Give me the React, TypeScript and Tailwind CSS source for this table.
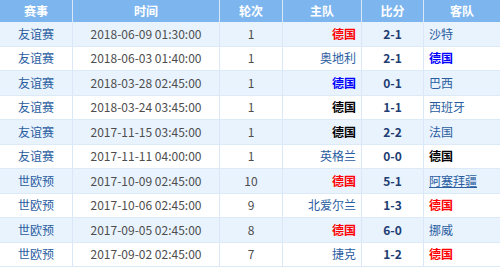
import React from 'react';

type Team = { name: string; style?: 'red' | 'blue' | 'black' | 'link' };

interface Match {
  event: string;
  time: string;
  round: string;
  home: Team;
  score: string;
  away: Team;
}

const matches: Match[] = [
  { event: '友谊赛', time: '2018-06-09 01:30:00', round: '1', home: { name: '德国', style: 'red' }, score: '2-1', away: { name: '沙特' } },
  { event: '友谊赛', time: '2018-06-03 01:40:00', round: '1', home: { name: '奥地利' }, score: '2-1', away: { name: '德国', style: 'blue' } },
  { event: '友谊赛', time: '2018-03-28 02:45:00', round: '1', home: { name: '德国', style: 'blue' }, score: '0-1', away: { name: '巴西' } },
  { event: '友谊赛', time: '2018-03-24 03:45:00', round: '1', home: { name: '德国', style: 'black' }, score: '1-1', away: { name: '西班牙' } },
  { event: '友谊赛', time: '2017-11-15 03:45:00', round: '1', home: { name: '德国', style: 'black' }, score: '2-2', away: { name: '法国' } },
  { event: '友谊赛', time: '2017-11-11 04:00:00', round: '1', home: { name: '英格兰' }, score: '0-0', away: { name: '德国', style: 'black' } },
  { event: '世欧预', time: '2017-10-09 02:45:00', round: '10', home: { name: '德国', style: 'red' }, score: '5-1', away: { name: '阿塞拜疆', style: 'link' } },
  { event: '世欧预', time: '2017-10-06 02:45:00', round: '9', home: { name: '北爱尔兰' }, score: '1-3', away: { name: '德国', style: 'red' } },
  { event: '世欧预', time: '2017-09-05 02:45:00', round: '8', home: { name: '德国', style: 'red' }, score: '6-0', away: { name: '挪威' } },
  { event: '世欧预', time: '2017-09-02 02:45:00', round: '7', home: { name: '捷克' }, score: '1-2', away: { name: '德国', style: 'red' } },
];

const teamClass = (style?: Team['style']) => {
  switch (style) {
    case 'red':
      return 'text-[#ff0000] font-bold';
    case 'blue':
      return 'text-[#0000ff] font-bold';
    case 'black':
      return 'text-black font-bold';
    case 'link':
      return 'text-[#2a5d9f] underline';
    default:
      return 'text-[#2a5d9f]';
  }
};

const cols = 'grid grid-cols-[73px_147px_63px_79px_62px_1fr]';
const cell = 'flex items-center border-r border-[#d9e7f7] last:border-r-0';

const App = () => {
  return (
    <div
      className="w-[500px] h-[275px] bg-white text-[12px] overflow-hidden"
      style={{ fontFamily: '"Noto Sans CJK SC", "Liberation Sans", sans-serif' }}
    >
      <div className={`${cols} h-[22px] bg-[#7db6ef] text-white font-bold`}>
        {['赛事', '时间', '轮次', '主队', '比分', '客队'].map((h) => (
          <div key={h} className={`${cell} justify-center border-[#a9cff5]`}>
            {h}
          </div>
        ))}
      </div>

      {matches.map((m, i) => (
        <div
          key={m.time}
          className={`${cols} h-[24.5px] border-b border-[#dce9f7] ${i % 2 === 0 ? 'bg-[#e9f3fe]' : 'bg-white'}`}
        >
          <div className={`${cell} justify-center text-[#2a5d9f]`}>{m.event}</div>
          <div className={`${cell} justify-center text-[#4d4d4d]`}>{m.time}</div>
          <div className={`${cell} justify-center text-[#4d4d4d]`}>{m.round}</div>
          <div className={`${cell} justify-end pr-[5px] ${teamClass(m.home.style)}`}>{m.home.name}</div>
          <div className={`${cell} justify-center font-bold text-[#1e3d72]`}>{m.score}</div>
          <div className={`${cell} justify-start pl-[5px] ${teamClass(m.away.style)}`}>{m.away.name}</div>
        </div>
      ))}
    </div>
  );
};

export default App;
